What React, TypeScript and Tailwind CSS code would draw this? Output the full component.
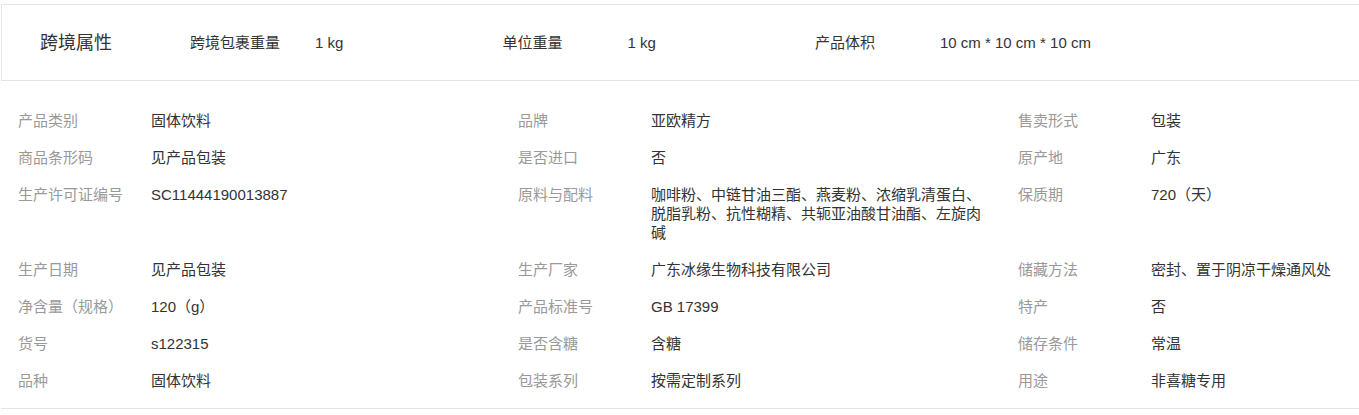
import React from "react";

const rows: [string, string][][] = [
  [
    ["产品类别", "固体饮料"],
    ["品牌", "亚欧精方"],
    ["售卖形式", "包装"],
  ],
  [
    ["商品条形码", "见产品包装"],
    ["是否进口", "否"],
    ["原产地", "广东"],
  ],
  [
    ["生产许可证编号", "SC11444190013887"],
    [
      "原料与配料",
      "咖啡粉、中链甘油三酯、燕麦粉、浓缩乳清蛋白、脱脂乳粉、抗性糊精、共轭亚油酸甘油酯、左旋肉碱",
    ],
    ["保质期", "720（天）"],
  ],
  [
    ["生产日期", "见产品包装"],
    ["生产厂家", "广东冰缘生物科技有限公司"],
    ["储藏方法", "密封、置于阴凉干燥通风处"],
  ],
  [
    ["净含量（规格）", "120（g）"],
    ["产品标准号", "GB 17399"],
    ["特产", "否"],
  ],
  [
    ["货号", "s122315"],
    ["是否含糖", "含糖"],
    ["储存条件", "常温"],
  ],
  [
    ["品种", "固体饮料"],
    ["包装系列", "按需定制系列"],
    ["用途", "非喜糖专用"],
  ],
];

const cross: [string, string][] = [
  ["跨境包裹重量", "1 kg"],
  ["单位重量", "1 kg"],
  ["产品体积", "10 cm * 10 cm * 10 cm"],
];

export default function App() {
  return (
    <div
      className="w-[1359px] h-[415px] bg-white overflow-hidden pt-[4px]"
      style={{ fontFamily: '"Liberation Sans", "Noto Sans CJK SC", sans-serif' }}
    >
      <div className="ml-[1px] h-[77px] border-t border-l border-b border-[#e5e5e5] flex items-center pl-[38px]">
        <div className="w-[150px] shrink-0 text-[18px] leading-[22px] text-[#333]">跨境属性</div>
        {cross.map(([k, v], i) => (
          <div key={i} className="w-[312.5px] shrink-0 flex text-[15px] leading-[19px] text-[#333]">
            <div className="w-[125px] shrink-0">{k}</div>
            <div>{v}</div>
          </div>
        ))}
      </div>
      <div className="ml-[1px] border-b border-[#e5e5e5] pt-[21px] pb-[9px]">
        {rows.map((row, ri) => (
          <div key={ri} className="flex py-[9px]">
            {row.map(([k, v], ci) => (
              <div key={ci} className="w-[500px] shrink-0 flex pl-[17px] text-[15px] leading-[19px]">
                <div className="w-[133px] shrink-0 text-[#999]">{k}</div>
                <div className="w-[338px] shrink-0 text-[#333]">{v}</div>
              </div>
            ))}
          </div>
        ))}
      </div>
    </div>
  );
}
